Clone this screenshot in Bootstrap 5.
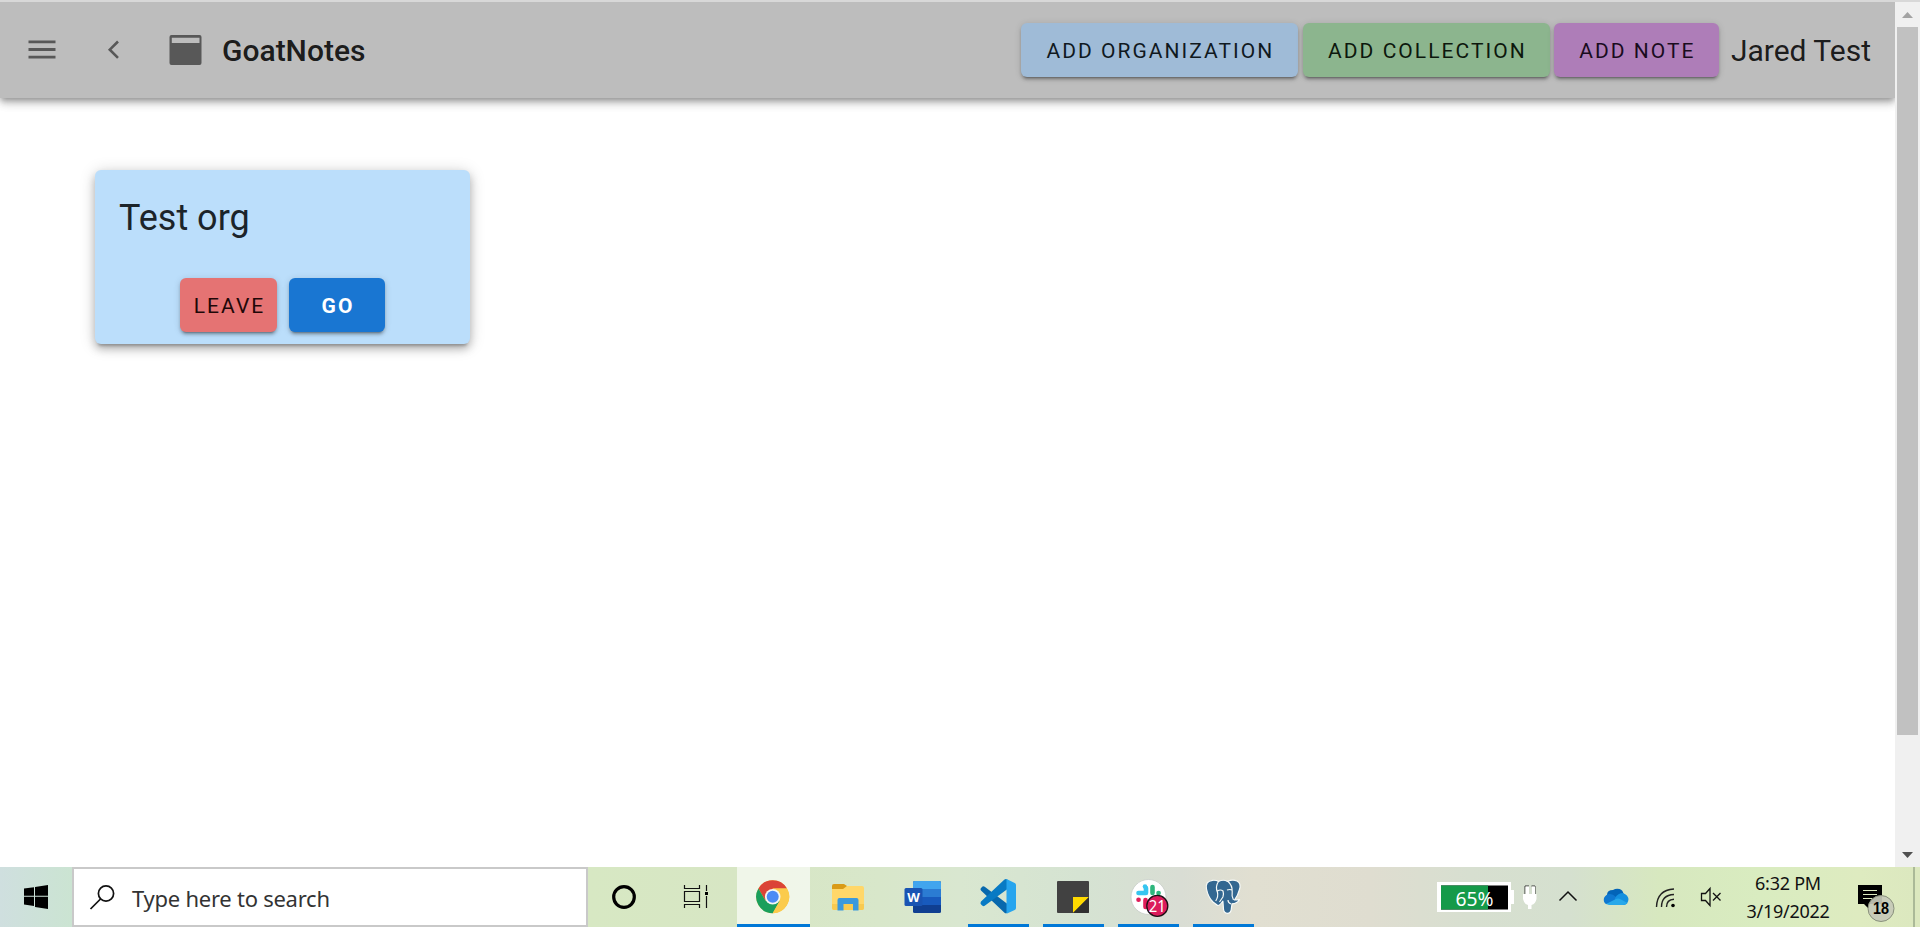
<!DOCTYPE html>
<html lang="en">
<head>
<meta charset="utf-8">
<title>GoatNotes</title>
<link href="https://cdn.jsdelivr.net/npm/bootstrap@5.3.0/dist/css/bootstrap.min.css" rel="stylesheet">
<style>
  html, body { height: 100%; overflow: hidden; }
  body { font-family: Roboto, "Liberation Sans", sans-serif; color: rgba(0,0,0,.87); background: #fff; }
  svg { display: block; flex: none; }
  .viewport { height: 867px; border-top: 2px solid #d8d8d8; }
  .app-bar { height: 96px; background: #bdbdbd; padding: 0 24px 0 28px;
    box-shadow: 0 3px 6px -1px rgba(0,0,0,.3), 0 6px 8px rgba(0,0,0,.14), 0 1px 14px rgba(0,0,0,.12); }
  .back-icon { margin-right: 46px; }
  .app-title { font-size: 30px; font-weight: 500; line-height: 36px; margin-left: 19px; padding-top: 1px; }
  .user-name { font-size: 30px; line-height: 36px; margin-left: 12px; padding-top: 1px; }
  .btn-md { height: 54px; font-size: 21px; font-weight: 400; letter-spacing: 2.03px; border: 0; border-radius: 6px; padding: 2px 0 0 2px;
    line-height: 52px; box-shadow: 0 4px 2px -3px rgba(0,0,0,.3), 0 3px 3px rgba(0,0,0,.18), 0 1px 7px rgba(0,0,0,.14); }
  .btn-org { width: 277px; background: #9fbbd7; color: #10191f; }
  .btn-coll { width: 247px; background: #8cb58e; color: #0d180d; margin-left: 5px; }
  .btn-note { width: 165px; background: #ae7db8; color: #1a0c1e; margin-left: 4px; }
  .btn-leave { width: 97px; background: #e57373; color: #1f0808; }
  .btn-go { width: 96px; background: #1976d2; color: #fff; font-weight: 700; margin-left: 12px; }
  .org-area { padding: 72px 0 0 95px; }
  .org-card { width: 375px; height: 174px; background: #bbdefb; border: 0; border-radius: 6px;
    box-shadow: 0 5px 3px -3px rgba(0,0,0,.22), 0 5px 8px rgba(0,0,0,.22), 0 2px 16px rgba(0,0,0,.18); }
  .org-name { font-size: 36px; line-height: 48px; padding: 24px 24px 36px; color: #1c242a; }
  .scroll-rail { width: 25px; background: #f0f0f0; }
  .scroll-thumb { width: 21px; height: 708px; background: #c1c1c1; }
  .taskbar { height: 60px; font-family: "Noto Sans", "Open Sans", sans-serif;
    background: linear-gradient(90deg, #cfdfdf 0, #cbe4d2 72px, #d7e8c3 588px, #d7e6c4 740px, #d8e7ca 880px, #d9e7d0 960px, #d5e3d2 1080px, #d9ddd4 1180px, #e1dfd1 1254px, #dfddd0 1370px, #d7dfd0 1470px, #d5e0cf 1570px, #d7e8bf 1660px, #d9ecc0 1760px, #deebc0 1860px, #dce8bf 1913px); }
  .search-box { width: 516px; height: 60px; border: 2px solid #c9c9c9; background: #fff; font-size: 22px; color: #333; }
  .search-label { letter-spacing: -.25px; padding-top: 2px; }
  .task-live { background: rgba(255,255,255,.62); border-bottom: 3px solid #0078d7; }
  .task-cell { width: 75px; height: 60px; }
  .task-first { width: 76px; }
  .run-line { width: 61px; height: 3px; background: #0078d7; }
  .clock { width: 114px; margin-right: 4px; font-size: 18px; letter-spacing: -.25px; line-height: 28px; padding-top: 2px; color: #111; }
  .show-desk { width: 7px; border-left: 2px solid #abb998; }
</style>
</head>
<body>
<div class="viewport d-flex">
  <main class="flex-grow-1 overflow-hidden">
    <header class="app-bar d-flex align-items-center">
      <svg width="28" height="20" viewBox="0 0 28 20"><path d="M.5 1.8h27M.5 9.5h27M.5 17.2h27" stroke="#585858" stroke-width="2.8"/></svg>
      <svg class="ms-5 back-icon" width="18" height="20" viewBox="0 0 18 20"><path d="M14 1.500 5.800 9.700l8.200 8.200" fill="none" stroke="#585858" stroke-width="2.6"/></svg>
      <svg width="35" height="32" viewBox="0 0 35 32"><path fill="#585858" fill-rule="evenodd" d="M3.500 1h28q2 0 2 2v26q0 2-2 2h-28q-2 0-2-2V3q0-2 2-2zM3.800 3.700v5.200h27.700V3.700z"/></svg>
      <div class="app-title">GoatNotes</div>
      <div class="d-flex ms-auto">
        <button class="btn btn-md btn-org">ADD ORGANIZATION</button>
        <button class="btn btn-md btn-coll">ADD COLLECTION</button>
        <button class="btn btn-md btn-note">ADD NOTE</button>
      </div>
      <div class="user-name">Jared Test</div>
    </header>
    <section class="org-area">
      <div class="card org-card">
        <div class="org-name">Test org</div>
        <div class="d-flex justify-content-center">
          <button class="btn btn-md btn-leave">LEAVE</button>
          <button class="btn btn-md btn-go">GO</button>
        </div>
      </div>
    </section>
  </main>
  <aside class="scroll-rail d-flex flex-column align-items-center">
    <svg width="25" height="25"><path d="M7 16l5.500-6 5.500 6z" fill="#a3a3a3"/></svg>
    <div class="scroll-thumb"></div>
    <svg class="mt-auto" width="25" height="25"><path d="M7 10l5.500 6L18 10z" fill="#505050"/></svg>
  </aside>
</div>

<footer class="taskbar d-flex">
  <svg width="72" height="60"><path d="M24 21.500l10-1.300v8.600H24zM35 20l13-2v10.800H35zM24 29.800h10v9.200l-10-1.500zM35 29.800h13V42l-13-2z"/></svg>
  <div class="search-box d-flex align-items-center">
    <svg width="58" height="56"><g fill="none" stroke="#111" stroke-width="1.700" transform="translate(-74 -2)"><circle cx="106" cy="26.500" r="7.600"/><path d="M100.500 32 90.500 42"/></g></svg>
    <span class="search-label">Type here to search</span>
  </div>
  <svg width="149" height="60"><circle cx="36" cy="30" r="10.300" fill="none" stroke="#000" stroke-width="3.200"/>
    <g fill="none" stroke="#111" stroke-width="1.200"><path d="M96.500 18v3.500h15V18M96.500 41v-3.500h15V41M96.500 24.500h15v10h-15zM118.500 18v6M118.500 29v12"/></g><path d="M117 25h3v3h-3z"/></svg>
  <div class="task-live">
    <svg width="73" height="57"><g transform="translate(35.700 29.700)"><circle r="16.500" fill="#fbc94a"/><path d="M-14.300-8.250A16.500 16.500 0 0 1 14.300-8.250L0-8.250-7.100 4.100z" fill="#db4437"/><path d="M-14.300-8.250A16.500 16.500 0 0 0 0 16.500L7.100 4.100-7.100 4.100z" fill="#1a9f5c"/><path d="M0-8.250H14.300A16.500 16.500 0 0 1 0 16.500L7.100 4.100z" fill="#fbcb4c"/><circle r="7.800" fill="#f4f7f3"/><circle r="6" fill="#4c8bf5"/></g></svg>
  </div>
  <div class="task-cell task-first">
    <svg width="75" height="60"><path d="M22 19q0-2 2-2h10l3 2-1 5H22z" fill="#d99b18"/><path d="M22 22h11l4-3h15q2 0 2 2v20q0 2-2 2H24q-2 0-2-2z" fill="#ffd769"/><path d="M22 37h32v4q0 2-2 2H24q-2 0-2-2z" fill="#f8ca50"/><path d="M27.500 33q0-2 2-2h17q2 0 2 2v10.500h-5.500V37h-9.500v6.500h-6z" fill="#3b99dc"/></svg>
  </div>
  <div class="task-cell">
    <svg width="75" height="60"><rect x="27" y="14" width="28" height="32" rx="1.500" fill="#103f91"/><path d="M27 22v-6.500q0-1.500 1.500-1.500h25q1.500 0 1.500 1.500V22z" fill="#41a5ee"/><path d="M27 22h28v8H27z" fill="#2b7cd3"/><path d="M27 30h28v8H27z" fill="#185abd"/><rect x="18.500" y="21" width="18" height="18" rx="1.500" fill="#1954b3"/><text x="27.500" y="34.500" text-anchor="middle" fill="#fff" font-family="Open Sans, sans-serif" font-size="13" font-weight="700">W</text></svg>
  </div>
  <div class="task-cell d-flex flex-column align-items-center">
    <svg width="75" height="57"><g transform="translate(-.5)"><path d="M20.500 23.500q-1.500-1.500.5-3l1-.9q1-.7 2.200.2L47 37v8.500q-1.500 1.500-3 .3z" fill="#0868ad"/><path d="M20.500 34.500 44 12.500q1.500-1 3 .2V22L24.200 38.800q-1.200.9-2.200 0l-1.200-1.100q-1.600-1.500-.3-3.200z" fill="#087ac4"/><path d="M46 12.100 54.200 15.900q1.300.6 1.300 2v23q0 1.400-1.300 2L46 46.700z" fill="#27a5ee"/></g></svg>
    <div class="run-line"></div>
  </div>
  <div class="task-cell d-flex flex-column align-items-center">
    <svg width="75" height="57"><rect x="21" y="14" width="32" height="32" rx="1" fill="#414141"/><path d="M37 46V30h16z" fill="#ffda00"/><path d="M37 46 53 30v15q0 1-1 1z" fill="#303030"/></svg>
    <div class="run-line"></div>
  </div>
  <div class="task-cell d-flex flex-column align-items-center">
    <svg width="75" height="57"><circle cx="37.500" cy="30" r="17.500" fill="#fff" stroke="#c7cdc8" stroke-width=".8"/><g stroke-width="4.600" stroke-linecap="round"><path d="M35 21v5M27.500 26h7" stroke="#36c5f0"/><path d="M41.500 20v6M47.500 26h.1" stroke="#2eb67d"/><path d="M27.500 32.800h.1M34.500 33v7" stroke="#e01e5a"/></g><circle cx="34" cy="19.500" r="2.300" fill="#36c5f0"/><circle cx="46.300" cy="38.900" r="10.500" fill="#dc1c5c" stroke="#1c1014" stroke-width="1.300"/><text x="46.300" y="44.500" text-anchor="middle" fill="#fff" font-family="Noto Sans, sans-serif" font-size="15.500" textLength="17" lengthAdjust="spacingAndGlyphs">21</text></svg>
    <div class="run-line"></div>
  </div>
  <div class="task-cell d-flex flex-column align-items-center">
    <svg width="75" height="57"><g fill="#336791" stroke="#f7faf8" stroke-width="1.200" stroke-linejoin="round"><path d="M27 35q-5-5-6.500-13-1.500-8 6-8.700 4-.3 6 1.200 5-2.500 9 0 5-2.500 9.500-.5 4.500 2.500 2.500 8.500-1.500 6-5 10.500l5-.3q-2 3.600-7.500 4.100l-.8 6q-.8 3.500-3.700 3.500-3.600 0-4-4l-.6-8.300q-3 4.600-5.200 4.500z"/><path d="M32.500 14.500q-3.500 5-1 11 1 4-1.800 8.500M42 14.500q4.500 4 4.200 10-.8 4.500 1.300 8.500M31.500 24q3-2 5.500 0 1 3-.1 6l-3.400 5M41 23q3-1 5 0M45 37q-3-1-3-4" fill="none"/></g></svg>
    <div class="run-line"></div>
  </div>
  <div class="tray d-flex ms-auto">
    <svg width="294" height="60" viewBox="1437 0 294 60">
      <path fill="#fff" d="M1437 15h74v8h3v14h-3v8h-74z"/><path fill="#000" d="M1441 18.500h67v24h-67z"/><path fill="#159a49" d="M1441 18.500h47v24h-47z"/>
      <text x="1474.500" y="38.500" text-anchor="middle" fill="#fff" font-family="Noto Sans, sans-serif" font-size="20" textLength="38" lengthAdjust="spacingAndGlyphs">65%</text>
      <path d="M1525 27v-8h4M1531.500 19h3.500v8" stroke="#333" fill="none"/>
      <path fill="#fff" d="M1525.500 19.500h3.500V27h3v-7.500h3V27h1.500v5q-1 5-5 6v4h-3.500v-4q-4-1-5-6v-5h2.500z"/>
      <path d="M1559.500 33.500 1568 25l8.500 8.500" fill="none" stroke="#111" stroke-width="1.500"/>
      <path fill="#0364b8" d="M1607 28q0-5 6-5 3-2 6.500-1 3.500 1 4 5l-9 6z"/><path fill="#0f78d0" d="M1606 37q-3-2-2-6 2-4 6-4 3 0 6 3l7 6z"/><path fill="#1490df" d="M1615 31q3-5 8-5 5 2 5.500 6-.2 5-4.500 6h-10z"/><path fill="#28a8ea" d="M1606 37l10-5q2-1 4 0l7.500 4q-1.500 2-4.500 2h-14z"/>
      <g fill="none" stroke="#222" stroke-width="1.400"><path d="M1656.500 40q.5-17 17.500-18M1661.500 40q0-12 12.500-12.500M1666.500 40q0-7.500 7.500-7.800"/></g><circle cx="1673" cy="38.500" r="1.800"/>
      <path d="M1701.500 26.500h4l4.500-5v17l-4.500-5h-4zM1713 26l7.500 7.500M1720.500 26l-7.500 7.500" fill="none" stroke="#111" stroke-width="1.300"/>
    </svg>
    <div class="clock text-center"><div>6:32 PM</div><div>3/19/2022</div></div>
    <svg width="64" height="60" viewBox="1849 0 64 60"><path d="M1858 18h24v19h-13v5l-5-5h-6z"/><path d="M1863 23.500h14M1863 27.500h14M1863 31.500h9" stroke="#deebc0" stroke-width="1"/><circle cx="1881" cy="41.500" r="13" fill="#c5c9b9" fill-opacity=".92" stroke="#88907c"/><text x="1881" y="47.300" text-anchor="middle" font-family="Liberation Sans, sans-serif" font-size="17" font-weight="700" textLength="16" lengthAdjust="spacingAndGlyphs">18</text></svg>
    <div class="show-desk"></div>
  </div>
</footer>
<script src="https://cdn.jsdelivr.net/npm/bootstrap@5.3.0/dist/js/bootstrap.bundle.min.js"></script>
</body>
</html>
